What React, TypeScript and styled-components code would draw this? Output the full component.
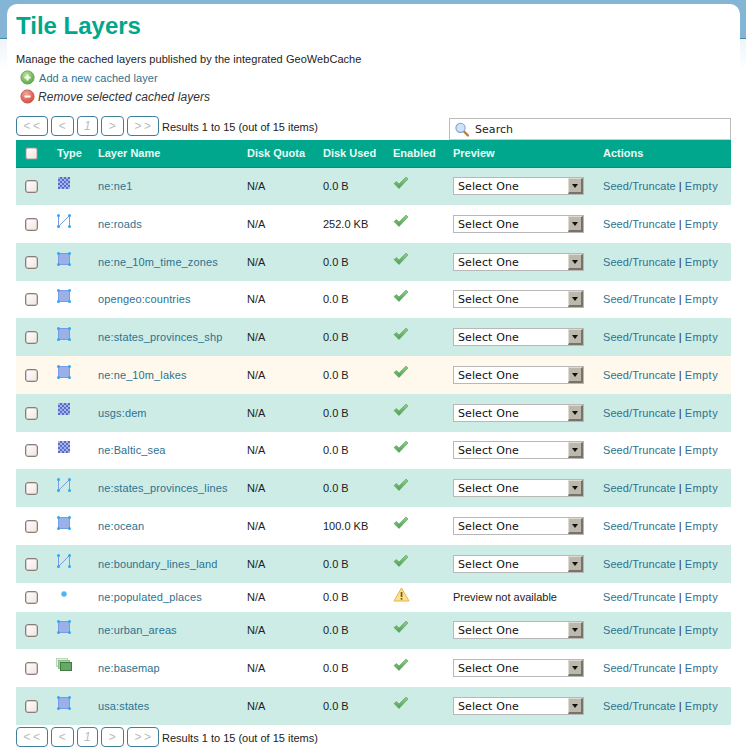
import React from "react";
import styled, { createGlobalStyle } from "styled-components";

const Global = createGlobalStyle`
  html, body { margin: 0; padding: 0; background: #fff; }
  body { font-family: "Liberation Sans", Arial, sans-serif; font-size: 11px; color: #222; }
`;

const Page = styled.div`
  width: 746px;
  height: 749px;
  overflow: hidden;
  padding: 4px 6px 0 7px;
  box-sizing: border-box;
  background:
    linear-gradient(#85b5d4 0, #85b5d4 38px, #3f88a8 38px, #3f88a8 39px, #eef4f9 39px, #fff 70px);
`;

const Card = styled.div`
  background: #fff;
  border-radius: 10px 10px 0 0;
  padding: 8px 9px 0;
  height: 745px;
  box-sizing: border-box;
`;

const Title = styled.h1`
  margin: 0;
  font-size: 24px;
  line-height: 28px;
  font-weight: bold;
  color: #00a78c;
`;

const Intro = styled.p`
  margin: 12px 0 0;
  font-size: 11px;
  line-height: 14px;
  letter-spacing: 0.05px;
  color: #222;
`;

const ActionRow = styled.div`
  display: flex;
  align-items: center;
  gap: 4px;
  padding-left: 4px;
  height: 19px;
`;

const ActionLink = styled.a`
  color: #2d7290;
  font-size: 11px;
  letter-spacing: 0.06px;
`;

const ActionMuted = styled.em`
  color: #333;
  font-size: 12px;
  letter-spacing: 0.07px;
  margin-left: -1px;
`;

const Actions = styled.div`
  margin-top: 2px;
`;

const PagerBar = styled.div`
  display: flex;
  align-items: flex-start;
  justify-content: space-between;
  margin-top: 10px;
  height: 24px;
`;

const Pager = styled.div`
  display: flex;
  align-items: center;
  gap: 3px;
  height: 20px;
`;

const PageButton = styled.span<{ $w: number; $italic?: boolean }>`
  box-sizing: border-box;
  width: ${(p) => p.$w}px;
  height: 20px;
  border: 1px solid #3f7f9c;
  border-radius: 4px;
  display: flex;
  align-items: center;
  justify-content: center;
  color: #bbb;
  font-size: 12px;
  letter-spacing: 2.5px;
  padding-left: 2px;
  font-style: ${(p) => (p.$italic ? "italic" : "normal")};
`;

const Results = styled.span`
  font-size: 11px;
  padding-top: 2px;
  color: #222;
`;

const Search = styled.div`
  box-sizing: border-box;
  width: 282px;
  height: 22px;
  margin-top: 2px;
  border: 1px solid #bbb;
  border-bottom-color: #ccc;
  display: flex;
  align-items: center;
  gap: 6px;
  padding-left: 5px;
  font-family: "DejaVu Sans", sans-serif;
  font-size: 11px;
  letter-spacing: 0.05px;
  color: #222;
`;

const Table = styled.table`
  width: 715px;
  border-collapse: collapse;
  table-layout: fixed;
`;

const HeadRow = styled.tr`
  height: 27.3px;
  background: #00a78c;
  border-bottom: 1px solid #008f7c;
`;

const Th = styled.th<{ $w: number }>`
  width: ${(p) => p.$w}px;
  padding: 0 0 1px 6px;
  box-sizing: border-box;
  text-align: left;
  color: #eafaf6;
  font-size: 11px;
  font-weight: bold;
`;

const Row = styled.tr<{ $tone: "teal" | "white" | "hl"; $short?: boolean }>`
  height: ${(p) => (p.$short ? "29px" : "37.75px")};
  background: ${(p) => (p.$tone === "teal" ? "#cdece6" : p.$tone === "hl" ? "#fef9ec" : "#fff")};
`;

const Td = styled.td`
  padding: 0 0 0 6px;
  font-size: 11px;
  color: #222;
  white-space: nowrap;
  vertical-align: middle;
`;

const CheckCell = styled.td`
  padding: 0 0 0 9px;
  vertical-align: middle;
`;

const CheckHead = styled.th`
  width: 35px;
  padding: 0 0 0 9px;
  box-sizing: border-box;
  text-align: left;
`;

const Check = styled.input.attrs({ type: "checkbox" })`
  appearance: none;
  display: block;
  width: 13px;
  height: 13px;
  margin: 1px 0 0;
  box-sizing: border-box;
  border: 1px solid #8a7d78;
  border-radius: 3px;
  background: linear-gradient(135deg, #ffffff, #f0e4e0);
  box-shadow: inset 0 0 0 0.5px #b8aca8;
`;

const IconWrap = styled.span`
  display: block;
  height: 16px;
  margin-top: -4px;
`;

const LayerLink = styled.a`
  color: #2d7290;
  letter-spacing: 0.12px;
`;

const SelectWrap = styled.span`
  position: relative;
  display: block;
  width: 131px;
  height: 18px;
`;

const Select = styled.select`
  appearance: none;
  display: block;
  width: 131px;
  height: 18px;
  box-sizing: border-box;
  border: 1px solid #b8b8b8;
  border-radius: 0;
  background: #fff;
  padding: 1px 0 0 4px;
  margin: 0;
  font-family: "DejaVu Sans", sans-serif;
  font-size: 11px;
  letter-spacing: 0.1px;
  color: #111;
`;

const Arrow = styled.span`
  position: absolute;
  right: 1px;
  top: 1px;
  width: 15px;
  height: 16px;
  box-sizing: border-box;
  background: #bcb8ac;
  border-right: 2px solid #77736a;
  border-bottom: 2px solid #77736a;
  border-top: 1px solid #dedbd3;
  border-left: 1px solid #dedbd3;
  pointer-events: none;
  &::after {
    content: "";
    position: absolute;
    left: 3px;
    top: 5px;
    border: 3.5px solid transparent;
    border-top: 4px solid #111;
  }
`;

const RowLink = styled.a<{ $wide?: boolean }>`
  color: #2d7290;
  letter-spacing: ${(p) => (p.$wide ? "0.45px" : "0.08px")};
`;

const Sep = styled.span`
  color: #222;
  margin: 0 3px;
`;

const Square = () => (
  <svg width="14" height="14" viewBox="0 0 14 14">
    <rect x="1.5" y="1.5" width="11" height="11" fill="#9ab0e8" stroke="#7d9ae0" />
    {[[1.5, 1.5], [12.5, 1.5], [1.5, 12.5], [12.5, 12.5]].map(([x, y]) => (
      <circle key={x * 20 + y} cx={x} cy={y} r="1.5" fill="#2ea8f5" />
    ))}
  </svg>
);

const RasterBox = styled.span`
  display: block;
  margin: 1px 0 0 1px;
  width: 12px;
  height: 12px;
`;

const Raster = () => (
  <RasterBox>
    <svg width="12" height="12" viewBox="0 0 12 12" shapeRendering="crispEdges">
      <rect width="12" height="12" fill="#5a6cc6" />
      {Array.from({ length: 36 }).map((_, i) => {
        const x = i % 6;
        const y = Math.floor(i / 6);
        return (x + y) % 2 === 0 ? <rect key={i} x={x * 2} y={y * 2} width="2" height="2" fill="#a8b4ee" /> : null;
      })}
    </svg>
  </RasterBox>
);

const Line = () => (
  <svg width="14" height="14" viewBox="0 0 14 14">
    <path d="M1.5 12.5 L1.5 1.5 M1.5 12.5 L12.5 1.5 L12.5 12.5" fill="none" stroke="#7d9ae0" strokeWidth="1" />
    {[[1.5, 12.5], [12.5, 1.5], [1.5, 1.5], [12.5, 12.5]].map(([x, y]) => (
      <circle key={x * 20 + y} cx={x} cy={y} r="1.5" fill="#2ea8f5" />
    ))}
  </svg>
);

const Point = () => (
  <svg width="14" height="14" viewBox="0 0 14 14">
    <circle cx="7" cy="7" r="2.6" fill="#45b4ee" stroke="#8fd3f6" />
  </svg>
);

const GroupBox = styled.span`
  display: block;
  margin-left: -1px;
  width: 17px;
  height: 14px;
`;

const Group = () => (
  <GroupBox>
    <svg width="17" height="14" viewBox="0 0 17 14" shapeRendering="crispEdges">
      <rect x="0.5" y="0.5" width="11" height="8" fill="#e3efdf" stroke="#bcd6b8" />
      <rect x="2.5" y="2.5" width="11" height="8" fill="#a8cca4" stroke="#8fbb8b" />
      <rect x="4.5" y="4.5" width="11" height="8" fill="#6aa668" stroke="#3d7d3d" />
    </svg>
  </GroupBox>
);

const CheckMark = () => (
  <svg width="16" height="14" viewBox="0 0 16 14">
    <defs>
      <linearGradient id="g-check" x1="0" y1="0" x2="0" y2="1">
        <stop offset="0" stopColor="#8fd08a" />
        <stop offset="1" stopColor="#4f9f4f" />
      </linearGradient>
    </defs>
    <path d="M1 7.5 L3.5 5.5 L6 8 L13 1 L15 3 L6 12.5 Z" fill="url(#g-check)" stroke="#5a9c5a" strokeWidth="0.6" strokeLinejoin="round" />
  </svg>
);

const Warning = () => (
  <svg width="17" height="15" viewBox="0 0 17 15">
    <path d="M8.5 1 L16 14 L1 14 Z" fill="#fbe38e" stroke="#e8b050" strokeWidth="1" strokeLinejoin="round" />
    <rect x="7.7" y="5" width="1.7" height="5" fill="#7a5a10" />
    <rect x="7.7" y="11" width="1.7" height="1.7" fill="#7a5a10" />
  </svg>
);

const Plus = () => (
  <svg width="15" height="15" viewBox="0 0 15 15">
    <defs>
      <radialGradient id="g-plus" cx="40%" cy="30%" r="75%">
        <stop offset="0" stopColor="#b9e29a" />
        <stop offset="1" stopColor="#53a640" />
      </radialGradient>
    </defs>
    <circle cx="7.5" cy="7.5" r="6.6" fill="url(#g-plus)" stroke="#6da85c" />
    <path d="M7.5 4.5 V10.5 M4.5 7.5 H10.5" stroke="#fff" strokeWidth="2" />
  </svg>
);

const Minus = () => (
  <svg width="15" height="15" viewBox="0 0 15 15">
    <defs>
      <radialGradient id="g-minus" cx="40%" cy="30%" r="75%">
        <stop offset="0" stopColor="#f4a79c" />
        <stop offset="1" stopColor="#d5453a" />
      </radialGradient>
    </defs>
    <circle cx="7.5" cy="7.5" r="6.6" fill="url(#g-minus)" stroke="#c0655c" />
    <path d="M4.5 7.5 H10.5" stroke="#fff" strokeWidth="2" />
  </svg>
);

const Lens = () => (
  <svg width="14" height="15" viewBox="0 0 14 15">
    <path d="M9 9.5 L13 13.5" stroke="#c07a35" strokeWidth="2.4" strokeLinecap="round" />
    <circle cx="5.5" cy="5.8" r="4.6" fill="#cfe3f8" stroke="#7da3cc" strokeWidth="1.1" />
  </svg>
);

type Kind = "raster" | "line" | "poly" | "point" | "group";
const icons: Record<Kind, React.ReactNode> = {
  raster: <Raster />,
  line: <Line />,
  poly: <Square />,
  point: <Point />,
  group: <Group />,
};

const layers: { name: string; kind: Kind; used: string; warn?: boolean; hl?: boolean }[] = [
  { name: "ne:ne1", kind: "raster", used: "0.0 B" },
  { name: "ne:roads", kind: "line", used: "252.0 KB" },
  { name: "ne:ne_10m_time_zones", kind: "poly", used: "0.0 B" },
  { name: "opengeo:countries", kind: "poly", used: "0.0 B" },
  { name: "ne:states_provinces_shp", kind: "poly", used: "0.0 B" },
  { name: "ne:ne_10m_lakes", kind: "poly", used: "0.0 B", hl: true },
  { name: "usgs:dem", kind: "raster", used: "0.0 B" },
  { name: "ne:Baltic_sea", kind: "raster", used: "0.0 B" },
  { name: "ne:states_provinces_lines", kind: "line", used: "0.0 B" },
  { name: "ne:ocean", kind: "poly", used: "100.0 KB" },
  { name: "ne:boundary_lines_land", kind: "line", used: "0.0 B" },
  { name: "ne:populated_places", kind: "point", used: "0.0 B", warn: true },
  { name: "ne:urban_areas", kind: "poly", used: "0.0 B" },
  { name: "ne:basemap", kind: "group", used: "0.0 B" },
  { name: "usa:states", kind: "poly", used: "0.0 B" },
];

const PagerControls = () => (
  <Pager>
    <PageButton $w={32}>&lt;&lt;</PageButton>
    <PageButton $w={23}>&lt;</PageButton>
    <PageButton $w={21} $italic>1</PageButton>
    <PageButton $w={23}>&gt;</PageButton>
    <PageButton $w={32}>&gt;&gt;</PageButton>
    <Results>Results 1 to 15 (out of 15 items)</Results>
  </Pager>
);

const BottomPager = styled.div`
  margin-top: 2px;
`;

export default function App() {
  return (
    <Page>
      <Global />
      <Card>
        <Title>Tile Layers</Title>
        <Intro>Manage the cached layers published by the integrated GeoWebCache</Intro>
        <Actions>
          <ActionRow>
            <Plus />
            <ActionLink>Add a new cached layer</ActionLink>
          </ActionRow>
          <ActionRow>
            <Minus />
            <ActionMuted>Remove selected cached layers</ActionMuted>
          </ActionRow>
        </Actions>
        <PagerBar>
          <PagerControls />
          <Search>
            <Lens />
            Search
          </Search>
        </PagerBar>
        <Table>
          <thead>
            <HeadRow>
              <CheckHead>
                <Check />
              </CheckHead>
              <Th $w={41}>Type</Th>
              <Th $w={149}>Layer Name</Th>
              <Th $w={76}>Disk Quota</Th>
              <Th $w={70}>Disk Used</Th>
              <Th $w={60}>Enabled</Th>
              <Th $w={150}>Preview</Th>
              <Th $w={134}>Actions</Th>
            </HeadRow>
          </thead>
          <tbody>
            {layers.map((l, i) => (
              <Row key={l.name} $tone={l.hl ? "hl" : i % 2 === 0 ? "teal" : "white"} $short={l.warn}>
                <CheckCell>
                  <Check />
                </CheckCell>
                <Td>
                  <IconWrap>{icons[l.kind]}</IconWrap>
                </Td>
                <Td>
                  <LayerLink>{l.name}</LayerLink>
                </Td>
                <Td>N/A</Td>
                <Td>{l.used}</Td>
                <Td>
                  <IconWrap>{l.warn ? <Warning /> : <CheckMark />}</IconWrap>
                </Td>
                <Td>
                  {l.warn ? (
                    "Preview not available"
                  ) : (
                    <SelectWrap>
                      <Select defaultValue="">
                        <option value="">Select One</option>
                      </Select>
                      <Arrow />
                    </SelectWrap>
                  )}
                </Td>
                <Td>
                  <RowLink>Seed/Truncate</RowLink>
                  <Sep>|</Sep>
                  <RowLink $wide>Empty</RowLink>
                </Td>
              </Row>
            ))}
          </tbody>
        </Table>
        <BottomPager>
          <PagerControls />
        </BottomPager>
      </Card>
    </Page>
  );
}
